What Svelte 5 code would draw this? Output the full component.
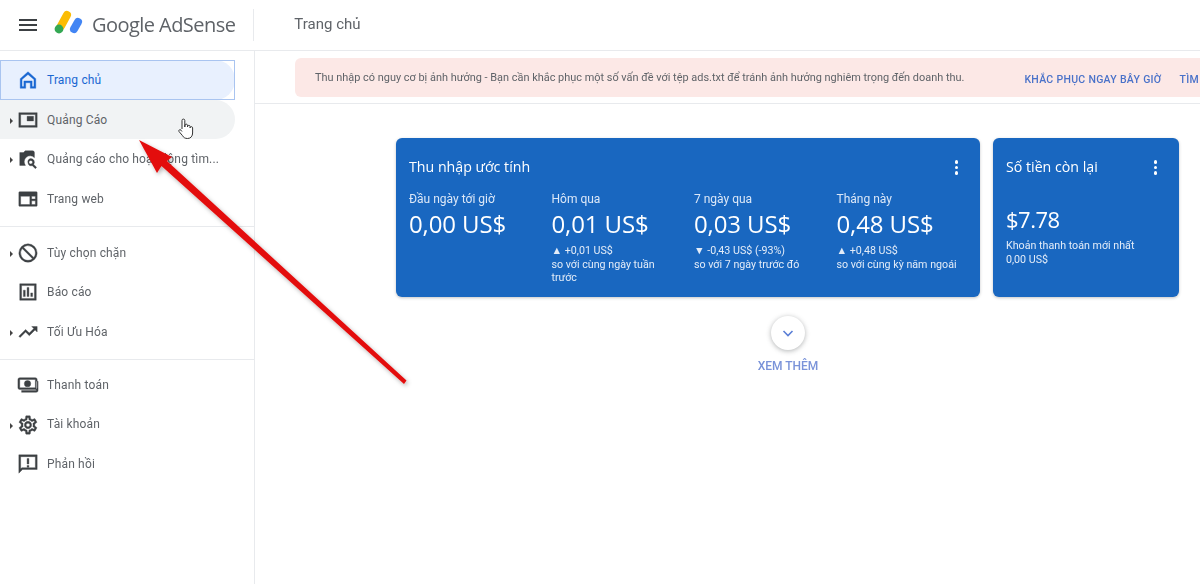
<script>
  const groups = [
    [
      { label: 'Trang chủ', icon: 'home', active: true },
      { label: 'Quảng Cáo', icon: 'ads', caret: true, hover: true },
      { label: 'Quảng cáo cho hoạt động tìm...', icon: 'search', caret: true },
      { label: 'Trang web', icon: 'web' }
    ],
    [
      { label: 'Tùy chọn chặn', icon: 'block', caret: true },
      { label: 'Báo cáo', icon: 'chart' },
      { label: 'Tối Ưu Hóa', icon: 'trend', caret: true }
    ],
    [
      { label: 'Thanh toán', icon: 'money' },
      { label: 'Tài khoản', icon: 'gear', caret: true },
      { label: 'Phản hồi', icon: 'feedback' }
    ]
  ];

  const stats = [
    { title: 'Đầu ngày tới giờ', value: '0,00 US$' },
    { title: 'Hôm qua', value: '0,01 US$', delta: '▲ +0,01 US$', note: 'so với cùng ngày tuần trước' },
    { title: '7 ngày qua', value: '0,03 US$', delta: '▼ -0,43 US$ (-93%)', note: 'so với 7 ngày trước đó' },
    { title: 'Tháng này', value: '0,48 US$', delta: '▲ +0,48 US$', note: 'so với cùng kỳ năm ngoái' }
  ];

  const icons = {
    home: 'M12 3 3.500 10.500V21h6v-6h5v6h6V10.500L12 3zm6.500 16h-2v-6h-9v6h-2v-7.500L12 6l6.500 5.500V19z',
    ads: 'M2 4h20v16H2V4zm2 2v12h16V6H4zm7 2h7v5h-7V8z',
    search: 'M3 5h4l2-2h8a2 2 0 0 1 2 2v5.500a6.500 6.500 0 0 0-9.800 8.500H3V5zm12 6.500a4 4 0 0 1 3.200 6.400l3.200 3.200-1.400 1.400-3.200-3.200A4 4 0 1 1 15 11.500zm0 2a2 2 0 1 0 0 4 2 2 0 0 0 0-4z',
    web: 'M3 4h18a1 1 0 0 1 1 1v14a1 1 0 0 1-1 1H3a1 1 0 0 1-1-1V5a1 1 0 0 1 1-1zm1 5v9h10V9H4zm12 0v3h4V9h-4zm0 5v4h4v-4h-4z',
    block: 'M12 2a10 10 0 1 1 0 20 10 10 0 0 1 0-20zM20 12a8 8 0 0 0-12.900-6.300L18.300 16.900A7.900 7.900 0 0 0 20 12zm-8 8a7.900 7.900 0 0 0 4.900-1.700L5.700 7.100A8 8 0 0 0 12 20z',
    chart: 'M3 3h18v18H3V3zm2 2v14h14V5H5zm2 5h2v7H7v-7zm4-3h2v10h-2V7zm4 6h2v4h-2v-4z',
    trend: 'm16 6 2.300 2.300-4.900 4.900-4-4L2 16.600 3.400 18l6-6 4 4 6.300-6.300L22 12V6h-6z',
    money: 'M3 4h17a2 2 0 0 1 2 2v9a2 2 0 0 1-2 2H3a2 2 0 0 1-2-2V6a2 2 0 0 1 2-2zm0 2v9h17V6H3zm8.500 1a3.500 3.500 0 1 1 0 7 3.500 3.500 0 0 1 0-7zM23 8v10a2 2 0 0 1-2 2H5v-2h16V8h2z',
    gear: 'M19.430 12.980c.04-.32.07-.64.07-.98 0-.34-.03-.66-.07-.98l2.110-1.650c.19-.15.24-.42.12-.64l-2-3.460c-.09-.16-.26-.25-.44-.25-.06 0-.12.01-.17.03l-2.490 1c-.52-.4-1.080-.73-1.690-.98l-.38-2.650C14.460 2.180 14.250 2 14 2h-4c-.25 0-.46.18-.49.42l-.38 2.650c-.61.25-1.170.59-1.690.98l-2.490-1c-.06-.02-.12-.03-.18-.03-.17 0-.34.09-.43.25l-2 3.460c-.13.22-.07.49.12.64l2.110 1.650c-.04.32-.07.65-.07.98 0 .33.03.66.07.98l-2.110 1.650c-.19.15-.24.42-.12.64l2 3.460c.09.16.26.25.44.25.06 0 .12-.01.17-.03l2.490-1c.52.4 1.080.73 1.690.98l.38 2.650c.03.24.24.42.49.42h4c.25 0 .46-.18.49-.42l.38-2.650c.61-.25 1.170-.59 1.690-.98l2.490 1c.06.02.12.03.18.03.17 0 .34-.09.43-.25l2-3.460c.12-.22.07-.49-.12-.64l-2.110-1.650zm-1.980-1.710c.04.31.05.52.05.73 0 .21-.02.43-.05.73l-.14 1.130.89.7 1.080.84-.7 1.210-1.270-.51-1.040-.42-.9.68c-.43.32-.84.56-1.250.73l-1.060.43-.16 1.130-.2 1.350h-1.400l-.19-1.350-.16-1.130-1.060-.43c-.43-.18-.83-.41-1.230-.71l-.91-.7-1.060.43-1.270.51-.7-1.210 1.080-.84.89-.7-.14-1.130c-.03-.31-.05-.54-.05-.74s.02-.43.05-.73l.14-1.130-.89-.7-1.080-.84.7-1.210 1.270.51 1.040.42.9-.68c.43-.32.84-.56 1.250-.73l1.060-.43.16-1.130.2-1.350h1.390l.19 1.350.16 1.130 1.060.43c.43.18.83.41 1.230.71l.91.7 1.060-.43 1.270-.51.7 1.210-1.070.85-.89.7.14 1.130zM12 8c-2.210 0-4 1.790-4 4s1.790 4 4 4 4-1.790 4-4-1.790-4-4-4zm0 6c-1.100 0-2-.9-2-2s.9-2 2-2 2 .9 2 2-.9 2-2 2z',
    feedback: 'M2 2h20v16H6l-4 4V2zm2 2v13.200L5.200 16H20V4H4zm7 2h2v6h-2V6zm0 7.500h2v2h-2v-2z'
  };
</script>

<div class="page">
  <header class="topbar">
    <button class="menu" aria-label="Menu">
      <svg width="24" height="24" viewBox="0 0 24 24"><path d="M3 18h18v-2H3v2zm0-5h18v-2H3v2zm0-7v2h18V6H3z" fill="#3c4043"/></svg>
    </button>
    <svg class="logo" width="28" height="26" viewBox="0 0 28 26">
      <path d="M8 14 14 3" stroke="#fbbc04" stroke-width="8" stroke-linecap="round"/>
      <path d="M21 17 25 10" stroke="#4285f4" stroke-width="8" stroke-linecap="round"/>
      <circle cx="6" cy="17" r="4.400" fill="#34a853"/>
    </svg>
    <span class="brand">Google AdSense</span>
    <span class="vr"></span>
    <span class="crumb">Trang chủ</span>
  </header>

  <div class="body">
    <nav class="side">
      {#each groups as group, g}
        <ul class:rule={g > 0}>
          {#each group as item}
            <li class:active={item.active} class:hover={item.hover}>
              {#if item.caret}<i class="caret"></i>{/if}
              <svg class="ico" width="22" height="22" viewBox="0 0 24 24"><path d={icons[item.icon]} fill={item.active ? '#1967d2' : '#3c4043'} stroke={item.active ? '#1967d2' : '#3c4043'} stroke-width=".4" fill-rule="evenodd"/></svg>
              <span>{item.label}</span>
            </li>
          {/each}
        </ul>
      {/each}
    </nav>

    <main>
      <div class="notice">
        <div class="pink">
          <p>Thu nhập có nguy cơ bị ảnh hưởng - Bạn cần khắc phục một số vấn đề với tệp ads.txt để tránh ảnh hưởng nghiêm trọng đến doanh thu.</p>
          <a href="#fix">KHẮC PHỤC NGAY BÂY GIỜ</a>
          <a href="#more">TÌM HIỂU THÊM</a>
        </div>
      </div>

      <section class="cards">
        <article class="card wide">
          <h2>Thu nhập ước tính <b class="dots"><i></i><i></i><i></i></b></h2>
          <div class="stats">
            {#each stats as s}
              <div class="stat">
                <div class="t">{s.title}</div>
                <div class="v">{s.value}</div>
                {#if s.delta}<div class="d">{s.delta}</div><div class="d">{s.note}</div>{/if}
              </div>
            {/each}
          </div>
        </article>
        <article class="card narrow">
          <h2>Số tiền còn lại <b class="dots"><i></i><i></i><i></i></b></h2>
          <div class="v bal">$7.78</div>
          <div class="d">Khoản thanh toán mới nhất</div>
          <div class="d">0,00 US$</div>
        </article>
      </section>

      <div class="more">
        <span class="round">
          <svg width="14" height="14" viewBox="0 0 14 14"><path d="M2.500 5 7 9.500 11.500 5" fill="none" stroke="#5b7fd6" stroke-width="1.600"/></svg>
        </span>
        <span class="lbl">XEM THÊM</span>
      </div>
    </main>
  </div>

  <svg class="arrow" width="1200" height="584" viewBox="0 0 1200 584">
    <defs>
      <filter id="sh" x="-10%" y="-10%" width="130%" height="130%"><feDropShadow dx="1.500" dy="2" stdDeviation="2" flood-color="#000" flood-opacity=".3"/></filter>
    </defs>
    <path filter="url(#sh)" d="M139 140 172 157 167 161 406.500 380.500 404 384 161.500 166 157 173Z" fill="#e3110f"/>
  </svg>

  <svg class="hand" width="18" height="22" viewBox="0 0 18 22">
    <path d="M5 11V2.500a1.400 1.400 0 0 1 2.800 0V9l.2-2a1.300 1.300 0 0 1 2.500.2V9l.2-1a1.300 1.300 0 0 1 2.400.3V10l.2-.6a1.200 1.200 0 0 1 2.300.4V15c0 3-1.800 5.500-5 5.500-2.700 0-4-1-5.200-3L2 13.500c-.8-1.300 1-2.600 2-1.300L5 13.500" fill="#fff" stroke="#333" stroke-width="1"/>
  </svg>
</div>

<style>
  :global(body) { margin: 0; background: #fff; }
  .page { position: relative; width: 1200px; height: 584px; overflow: hidden; font-family: Roboto, "Noto Sans", sans-serif; color: #3c4043; filter: blur(.35px); }
  .topbar { height: 50px; display: flex; align-items: center; border-bottom: 1px solid #e8eaed; box-sizing: content-box; }
  .menu { border: 0; background: none; padding: 0; margin-left: 16px; width: 24px; height: 24px; }
  .logo { margin-left: 13px; overflow: visible; }
  .brand { margin: 0 0 2px 11px; font-family: "Open Sans", sans-serif; font-size: 20px; letter-spacing: -.55px; color: #5f6368; white-space: nowrap; }
  .vr { width: 1px; height: 32px; background: #e8eaed; margin-left: 18px; }
  .crumb { margin: 0 0 2px 40px; font-size: 15px; color: #5f6368; }

  .body { display: flex; height: 533px; }
  .side { width: 254px; flex: none; border-right: 1px solid #e8eaed; padding-top: 9px; box-sizing: content-box; }
  ul { list-style: none; margin: 0; padding: 0 0 7px; }
  ul.rule { border-top: 1px solid #e8eaed; padding-top: 6px; padding-bottom: 7px; }
  ul.rule:last-child { padding-top: 5px; }
  li { position: relative; isolation: isolate; width: 235px; height: 39.7px; display: flex; align-items: center; font-size: 12px; letter-spacing: .16px; color: #5f6368; white-space: nowrap; box-sizing: border-box; }
  li .ico { position: absolute; left: 17px; top: 9px; }
  li span { margin-left: 47px; }
  .caret { position: absolute; left: 10px; top: 18px; border-left: 3.500px solid #444; border-top: 3px solid transparent; border-bottom: 3px solid transparent; }
  li.active { color: #1967d2; outline: 1px solid #a9c4f0; outline-offset: -1px; }
  li.active::before { content: ''; position: absolute; inset: 0; z-index: -1; background: #e8f0fe; border-radius: 0 20px 20px 0; }
  li.hover { background: #f1f3f4; border-radius: 0 20px 20px 0; }

  main { flex: 1; min-width: 0; }
  .notice { border-bottom: 1px solid #e8eaed; padding: 7px 0 0 40px; box-sizing: content-box; margin-bottom: 34px; height: 45px; overflow: hidden; }
  .pink { width: 1000px; height: 39px; background: #fce8e6; border-radius: 6px; display: flex; align-items: center; padding-left: 20px; font-size: 10.930px; white-space: nowrap; box-sizing: border-box; }
  .pink p { margin: 0 60px 0 0; color: #5f6368; }
  .pink a { color: #4a72c9; text-decoration: none; font-weight: 500; font-size: 10.500px; letter-spacing: .3px; margin: 4px 18px 0 0; }

  .cards { display: flex; gap: 13px; padding-left: 141px; }
  .card { height: 159px; background: #1967c0; border-radius: 6px; color: #fff; box-shadow: 0 1px 3px rgba(60,64,67,.3); box-sizing: border-box; padding: 19px 14px 0 13px; }
  .wide { width: 584px; }
  .narrow { width: 186px; }
  h2 { position: relative; margin: 0 0 14px; font-family: "Open Sans", sans-serif; font-weight: 400; font-size: 14.200px; line-height: 20px; color: #fff; }
  .dots { position: absolute; right: 8px; top: 3px; display: flex; flex-direction: column; gap: 2px; }
  .dots i { width: 3.500px; height: 3.500px; border-radius: 50%; background: #fff; }
  .stats { display: grid; grid-template-columns: repeat(4, 142.500px); }
  .stat { padding-right: 20px; }
  .t { font-size: 12px; line-height: 16px; color: #dbe7f7; }
  .v { font-family: "Open Sans", sans-serif; font-size: 24px; line-height: 28px; margin: 3px 0 6px; white-space: nowrap; letter-spacing: -.1px; }
  .d { font-size: 10.700px; line-height: 13.500px; color: #e3ecf8; }
  .v.bal { margin: 28px 0 6px; font-size: 22px; letter-spacing: -.5px; }

  .more { display: flex; flex-direction: column; align-items: center; margin: 19px 0 0 0; width: 1066px; }
  .round { width: 34px; height: 34px; border-radius: 50%; background: #fff; box-shadow: 0 1px 5px rgba(60,64,67,.4); display: flex; align-items: center; justify-content: center; }
  .lbl { margin-top: 9px; font-size: 12px; font-weight: 500; color: #7a93d9; }

  .arrow { position: absolute; left: 0; top: 0; pointer-events: none; }
  .hand { position: absolute; left: 177px; top: 118px; }
</style>
